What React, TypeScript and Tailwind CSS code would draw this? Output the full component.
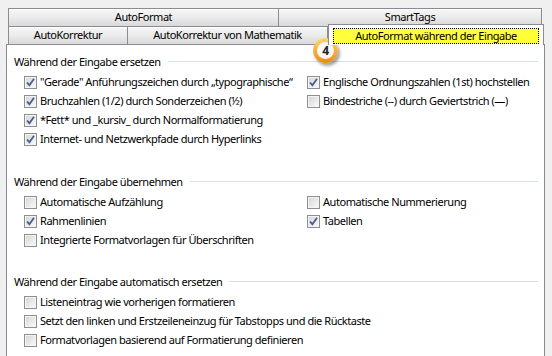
import type { ReactNode } from 'react';

type Item = { label: string; checked: boolean } | null;

const sections: { title: string; cols: 1 | 2; items: Item[] }[] = [
  {
    title: 'Während der Eingabe ersetzen',
    cols: 2,
    items: [
      { label: '"Gerade" Anführungszeichen durch „typographische“', checked: true },
      { label: 'Englische Ordnungszahlen (1st) hochstellen', checked: true },
      { label: 'Bruchzahlen (1/2) durch Sonderzeichen (½)', checked: true },
      { label: 'Bindestriche (--) durch Geviertstrich (—)', checked: false },
      { label: '*Fett* und _kursiv_ durch Normalformatierung', checked: true },
      null,
      { label: 'Internet- und Netzwerkpfade durch Hyperlinks', checked: true },
      null,
    ],
  },
  {
    title: 'Während der Eingabe übernehmen',
    cols: 2,
    items: [
      { label: 'Automatische Aufzählung', checked: false },
      { label: 'Automatische Nummerierung', checked: false },
      { label: 'Rahmenlinien', checked: true },
      { label: 'Tabellen', checked: true },
      { label: 'Integrierte Formatvorlagen für Überschriften', checked: false },
      null,
    ],
  },
  {
    title: 'Während der Eingabe automatisch ersetzen',
    cols: 1,
    items: [
      { label: 'Listeneintrag wie vorherigen formatieren', checked: false },
      { label: 'Setzt den linken und Erstzeileneinzug für Tabstopps und die Rücktaste', checked: false },
      { label: 'Formatvorlagen basierend auf Formatierung definieren', checked: false },
    ],
  },
];

function Checkbox({ checked }: { checked: boolean }) {
  return (
    <span className="relative flex h-[13px] w-[13px] shrink-0 items-center justify-center border border-[#8e8f8f] bg-linear-to-br from-[#d4d4d4] to-[#fbfbfb] shadow-[inset_0_0_0_1px_#f4f4f4]">
      {checked && (
        <svg width="9" height="9" viewBox="0 0 9 9" className="absolute">
          <path d="M1 4.5 L3.4 7.2 L8 0.8" fill="none" stroke="#4a5d8c" strokeWidth="1.8" />
        </svg>
      )}
    </span>
  );
}

function Tab({ children, className }: { children: ReactNode; className: string }) {
  return (
    <div
      className={`flex items-center justify-center border-t border-[#898c95] bg-linear-to-b from-[#f6f6f6] via-[#ebebeb] to-[#d9d9d9] shadow-[inset_0_1px_0_#ffffff] ${className}`}
    >
      {children}
    </div>
  );
}

export default function App() {
  return (
    <div className="relative h-[356px] w-[552px] overflow-hidden bg-[#f0f0f0] font-['Noto_Sans',sans-serif] text-[11px] tracking-[-0.45px] text-black">
      <div className="pl-[8px] pt-[8px]">
        <div className="flex h-[18px] w-[534px]">
          <Tab className="w-[271px] border-x">AutoFormat</Tab>
          <Tab className="flex-1 border-r">SmartTags</Tab>
        </div>
        <div className="flex h-[18px] items-start">
          <Tab className="h-[18px] w-[120px] border-x">AutoKorrektur</Tab>
          <Tab className="h-[18px] w-[200px] border-r">AutoKorrektur von Mathematik</Tab>
          <div className="relative z-10 -mt-[2px] h-[21px] w-[216px] border-x border-t border-[#898c95] bg-white pl-[4px] pr-[4px] pt-[3px]">
            <div className="flex h-[16px] items-center justify-center border border-dotted border-black bg-[#ffff3c]">
              AutoFormat während der Eingabe
            </div>
          </div>
        </div>
      </div>

      <div className="ml-[6px] w-[539px] border border-[#898c95] bg-white pb-[20px] pl-[7px] pt-[8px]">
        {sections.map((section, si) => (
          <section key={section.title} className={si === 1 ? 'mt-[24px]' : si === 2 ? 'mt-[23px]' : ''}>
            <div className="flex h-[19px] items-center">
              <span>{section.title}</span>
              <div className="mb-[3px] ml-[7px] mr-[6px] h-px flex-1 bg-[#d5dfe5]" />
            </div>
            <div
              className={`mt-px grid auto-rows-[19px] pl-[10px] ${
                section.cols === 2 ? 'grid-cols-[283px_1fr]' : 'grid-cols-1'
              }`}
            >
              {section.items.map((item, i) =>
                item ? (
                  <div key={i} className="flex items-center gap-[3px] whitespace-nowrap">
                    <Checkbox checked={item.checked} />
                    <span>{item.label}</span>
                  </div>
                ) : (
                  <div key={i} />
                ),
              )}
            </div>
          </section>
        ))}
      </div>

      {/* callout badge */}
      <div className="absolute left-[313px] top-[38px] flex h-[25px] w-[25px] items-center justify-center rounded-full bg-linear-to-b from-[#ffd66a] to-[#e98c00] shadow-[2px_3px_3px_rgba(0,0,0,0.35)]">
        <div className="flex h-[17px] w-[17px] items-center justify-center rounded-full bg-[radial-gradient(circle_at_40%_35%,#ffffff,#f3efe6)] text-[12px] font-bold leading-none text-[#222]">
          4
        </div>
      </div>
    </div>
  );
}
